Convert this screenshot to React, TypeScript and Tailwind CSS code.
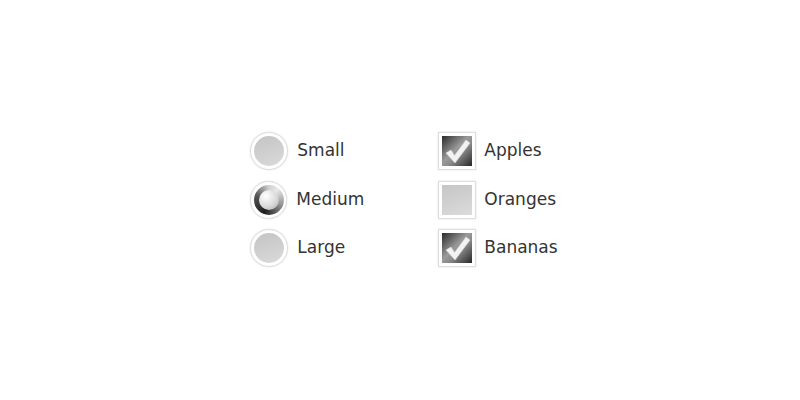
import React from "react";

function Radio({ checked }: { checked?: boolean }) {
  return (
    <div className="w-[38px] h-[38px] rounded-full bg-white border border-[#dedede] shadow-[0_0_2px_rgba(0,0,0,0.12)] flex items-center justify-center">
      {checked ? (
        <div className="w-[30px] h-[30px] rounded-full bg-[conic-gradient(from_200deg,#1e1e1e,#555_90deg,#d0d0d0_160deg,#e8e8e8_200deg,#888_280deg,#1e1e1e)] flex items-center justify-center">
          <div className="w-[20px] h-[20px] rounded-full bg-[radial-gradient(circle_at_35%_30%,#ffffff,#dadada_55%,#a8a8a8)]" />
        </div>
      ) : (
        <div className="w-[30px] h-[30px] rounded-full bg-[linear-gradient(160deg,#c4c4c4,#cfcfcf_50%,#dadada)]" />
      )}
    </div>
  );
}

function Checkbox({ checked }: { checked?: boolean }) {
  return (
    <div className="w-[38px] h-[38px] bg-white border border-[#dedede] shadow-[0_0_2px_rgba(0,0,0,0.12)] flex items-center justify-center">
      {checked ? (
        <svg width="30" height="30" viewBox="0 0 30 30">
          <defs>
            <linearGradient id="cb" x1="0" y1="0" x2="1" y2="1">
              <stop offset="0" stopColor="#2a2a2a" />
              <stop offset="0.45" stopColor="#9a9a9a" />
              <stop offset="0.6" stopColor="#8a8a8a" />
              <stop offset="1" stopColor="#262626" />
            </linearGradient>
          </defs>
          <rect width="30" height="30" fill="url(#cb)" />
          <path
            d="M4 17 L9 14 L12.5 19.5 L24 4 L28 7 L13 27 Z"
            fill="#f2f2f2"
            stroke="#d8d8d8"
            strokeWidth="0.6"
            strokeLinejoin="round"
          />
        </svg>
      ) : (
        <div className="w-[30px] h-[30px] bg-[linear-gradient(160deg,#c6c6c6,#d0d0d0_50%,#dcdcdc)]" />
      )}
    </div>
  );
}

function Row({ control, label, gap }: { control: React.ReactNode; label: string; gap: string }) {
  return (
    <div className={`flex items-center h-[38px] ${gap}`}>
      {control}
      <span className="text-[17px] text-[#333]">{label}</span>
    </div>
  );
}

export default function App() {
  return (
    <div
      className="w-[800px] h-[400px] bg-white flex items-center justify-center"
      style={{ fontFamily: '"DejaVu Sans", Verdana, sans-serif' }}
    >
      <div className="flex gap-[74px] pl-[8px] mb-[1px]">
        <div className="flex flex-col gap-[10.5px] w-[114px]">
          <Row gap="gap-[9px]" control={<Radio />} label="Small" />
          <Row gap="gap-[9px]" control={<Radio checked />} label="Medium" />
          <Row gap="gap-[9px]" control={<Radio />} label="Large" />
        </div>
        <div className="flex flex-col gap-[10.5px]">
          <Row gap="gap-[8px]" control={<Checkbox checked />} label="Apples" />
          <Row gap="gap-[8px]" control={<Checkbox />} label="Oranges" />
          <Row gap="gap-[8px]" control={<Checkbox checked />} label="Bananas" />
        </div>
      </div>
    </div>
  );
}
